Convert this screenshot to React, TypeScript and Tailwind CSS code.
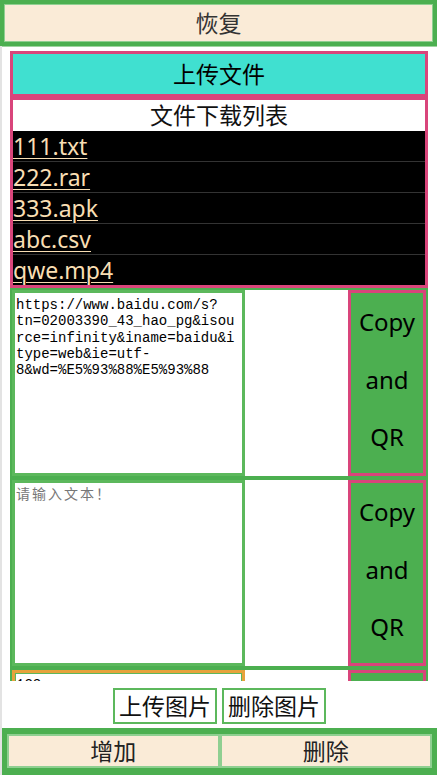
import React from 'react';

const files = ['111.txt', '222.rar', '333.apk', 'abc.csv', 'qwe.mp4'];

const url =
  'https://www.baidu.com/s?tn=02003390_43_hao_pg&isource=infinity&iname=baidu&itype=web&ie=utf-8&wd=%E5%93%88%E5%93%88';

const sans = "font-['Noto_Sans','Noto_Sans_CJK_SC',sans-serif]";

const TextRow: React.FC<{ value?: string; focused?: boolean }> = ({ value, focused }) => (
  <div className="flex h-[190px] shrink-0 border-2 border-[#4caf50] bg-white">
    <textarea
      readOnly
      value={value ?? ''}
      placeholder="请输入文本！"
      className={`w-[233px] shrink-0 resize-none border-[3px] px-[1px] pt-[4px] font-['Liberation_Mono','Noto_Sans_CJK_SC',monospace] text-[14px] leading-[16.3px] text-black outline-none placeholder:tracking-[2px] placeholder:text-[#777] ${
        focused ? 'border-[#e6a23c] shadow-[inset_0_0_0_1px_#5cb85c]' : 'border-[#5cb85c]'
      }`}
    />
    <div className="flex-1 bg-white" />
    <button
      className={`${sans} w-[78px] shrink-0 border-[3px] border-[#d9457b] bg-[#4caf50] pb-[12px] text-[24px] leading-[57.5px] text-black`}
    >
      Copy
      <br />
      and
      <br />
      QR
    </button>
  </div>
);

export default function App() {
  return (
    <div className={`${sans} flex h-[775px] w-[437px] flex-col overflow-hidden bg-white`}>
      <button className="h-[46px] w-full shrink-0 border-4 border-[#4caf50] bg-[#faebd7] text-[23px] text-[#333] shadow-[inset_0_0_0_1px_#8fcf91,0_1px_0_#9ed49f]">
        恢复
      </button>

      <div className="flex flex-1 flex-col border-l-2 border-[#e3e3e3]">
        <div className="mt-[5px] ml-[8px] mr-[9px] flex h-[630px] shrink-0 flex-col overflow-hidden">
          <button className="h-[46px] shrink-0 border-[3px] border-[#d9457b] bg-[#40e0d0] text-[23px] text-black">
            上传文件
          </button>

          <div className="shrink-0 border-[3px] border-[#d9457b] bg-black">
            <div className="h-[31px] bg-white text-center text-[23px] leading-[31px] text-[#111]">
              文件下载列表
            </div>
            {files.map((f, i) => (
              <div
                key={f}
                className={`text-[23px] leading-[30px] ${i > 0 ? 'h-[31px] border-t border-[#333]' : 'h-[30px]'}`}
              >
                <a href="#" className="text-[#f8deb3] underline decoration-1 underline-offset-[3px]">
                  {f}
                </a>
              </div>
            ))}
          </div>

          <TextRow value={url} />
          <TextRow />
          <TextRow value="123" focused />
        </div>

        <div className="mt-[7px] flex justify-center gap-[5px]">
          <button className="h-[36px] w-[104px] border-2 border-[#5cb85c] bg-white text-[23px] leading-none text-[#111]">
            上传图片
          </button>
          <button className="h-[36px] w-[104px] border-2 border-[#5cb85c] bg-white text-[23px] leading-none text-[#111]">
            删除图片
          </button>
        </div>

        <div className="mt-auto flex h-[47px] shrink-0 bg-[#4caf50] px-[5px] pt-[6px] pb-[7px]">
          <button className="flex-1 border-2 border-[#8fcf91] bg-[#faebd7] text-[23px] leading-none text-[#222]">
            增加
          </button>
          <button className="flex-1 border-2 border-[#8fcf91] bg-[#faebd7] text-[23px] leading-none text-[#222]">
            删除
          </button>
        </div>
      </div>
    </div>
  );
}
